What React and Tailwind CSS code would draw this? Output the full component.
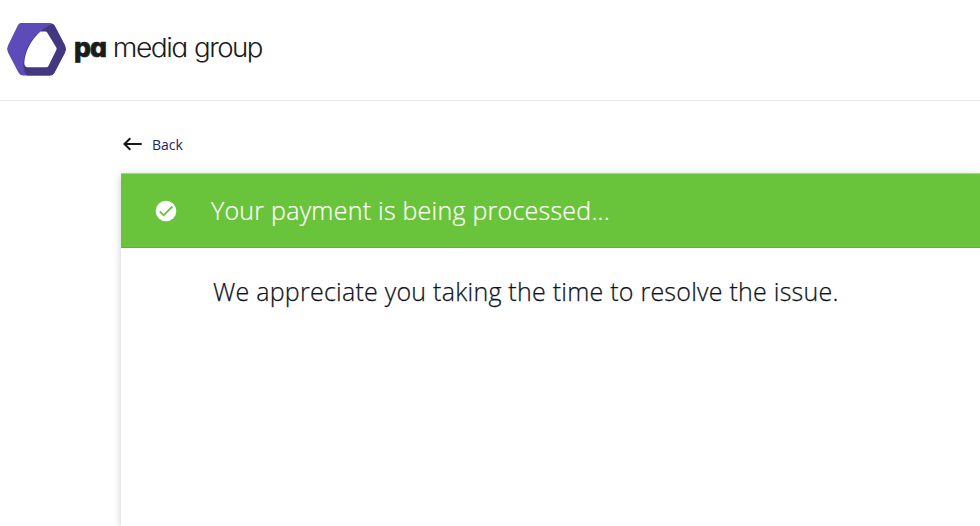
const Logo = () => (
  <svg className="overflow-visible" width="300" height="70" viewBox="0 0 300 70" role="img" aria-label="pa media group">
    <path
      d="M20.5 3H49.5Q53 3 54.8 6L65 25.5Q66.8 29 65 32.5L54.8 52Q53 55.5 49.5 55.5H23.5Q20 55.5 18.2 52L8 32.5Q6.2 29 8 25.5L17.5 6Q19 3 20.5 3Z"
      fill="#5c4bb8"
    />
    <path
      d="M52.5 3.8Q54 4.6 54.8 6L65 25.5Q66.8 29 65 32.5L54.8 52Q53 55.5 49.5 55.5H27Q22.5 50 23.5 41C26 25 34 13 52.5 3.8Z"
      fill="#43387f"
    />
    <path
      d="M40.5 11.5H45.3Q46.6 11.5 47.3 12.7L56.3 27.5Q57 28.8 56.3 30L48.4 46.1Q47.8 47.3 46.5 47.3H27.5Q24.4 47 24.3 43C25 31 31 20 40.5 11.5Z"
      fill="#fff"
    />
    <g className="font-['Inter',sans-serif] [font-feature-settings:'cv11']" fill="#1b1b1b">
      <text x="74" y="37" fontSize="27" fontWeight="800" letterSpacing="-1" stroke="#1b1b1b" strokeWidth="0.7" textLength="32" lengthAdjust="spacingAndGlyphs">pa</text>
      <text x="112.8" y="37" fontSize="26" fontWeight="300" letterSpacing="-1.4" textLength="74" lengthAdjust="spacingAndGlyphs">media</text>
      <text x="194" y="37" fontSize="26" fontWeight="300" letterSpacing="-1.4" textLength="68" lengthAdjust="spacingAndGlyphs">group</text>
    </g>
  </svg>
);

const BackArrow = () => (
  <svg width="20" height="14" viewBox="0 0 20 14" fill="none" stroke="#16161d" strokeWidth="2">
    <path d="M18.7 7H2M7.3 1.2L1.5 7l5.8 5.8" />
  </svg>
);

const SuccessIcon = () => (
  <svg width="22" height="22" viewBox="0 0 22 22" fill="none">
    <circle cx="11" cy="11" r="10.3" fill="#fff" />
    <path d="M4.7 11.3l4 4 8.6-8.8" stroke="#6ac43b" strokeWidth="1.8" />
  </svg>
);

export default function App() {
  return (
    <div className="h-screen overflow-hidden bg-white flex flex-col font-['Open_Sans',sans-serif]">
      <header className="h-[101px] shrink-0 border-b border-[#ebebeb] pt-5">
        <Logo />
      </header>

      <main className="flex-1 flex flex-col pl-[121px]">
        <a href="#" className="h-[72px] pt-[14px] flex items-center gap-[9px] pl-[2px] text-sm text-[#1b2469]">
          <BackArrow />
          <span className="pt-px">Back</span>
        </a>

        <section className="flex-1 bg-white shadow-[0_2px_8px_rgba(0,0,0,0.2)]">
          <div className="h-[75px] flex items-center bg-[#6ac43b] border-t border-t-[#9fda80] border-b border-b-[#5cb32f] pl-[34px] text-white">
            <SuccessIcon />
            <h1 className="ml-[34px] pt-px text-[25px] font-light tracking-[0.24px] whitespace-nowrap [-webkit-text-stroke:0.2px_#fff]">
              Your payment is being processed...
            </h1>
          </div>
          <p className="pl-[92px] pt-[26px] text-[25px] leading-[34px] font-light tracking-[0.24px] text-[#0d1220] whitespace-nowrap [-webkit-text-stroke:0.25px_#0d1220]">
            We appreciate you taking the time to resolve the issue.
          </p>
        </section>
      </main>
    </div>
  );
}
